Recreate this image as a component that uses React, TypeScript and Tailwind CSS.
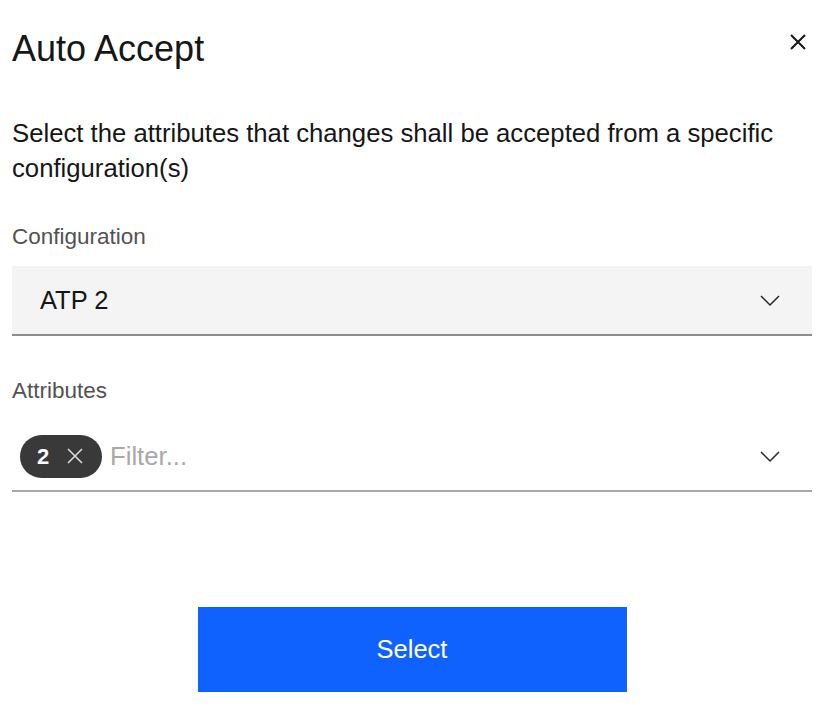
import React from 'react';

const Chevron: React.FC = () => (
  <svg width="22" height="22" viewBox="0 0 22 22" fill="none">
    <path d="M2 7l9 9 9-9" stroke="#262626" strokeWidth="1.5" />
  </svg>
);

export default function App() {
  return (
    <div className="w-[819px] h-[707px] bg-white font-['Liberation_Sans',Arial,sans-serif] text-[#161616] relative overflow-hidden">
      {/* Close */}
      <button className="absolute left-[788px] top-[32px] w-[20px] h-[20px] flex items-center justify-center">
        <svg width="18" height="18" viewBox="0 0 18 18">
          <path d="M2 2l14 14M16 2L2 16" stroke="#161616" strokeWidth="2" />
        </svg>
      </button>

      <div className="flex flex-col pl-[12px] pr-[7px]">
        {/* Title */}
        <h1 className="mt-[28px] text-[36px] leading-[42px] font-normal">Auto Accept</h1>

        {/* Description */}
        <p className="mt-[46px] text-[25.7px] leading-[35px] text-[#161616] pr-[20px]">
          Select the attributes that changes shall be accepted from a specific configuration(s)
        </p>

        {/* Configuration */}
        <label className="mt-[39px] text-[22.5px] leading-[24px] text-[#525252]">Configuration</label>
        <div className="mt-[17px] h-[70px] bg-[#f4f4f4] border-b-2 border-[#8d8d8d] flex items-center justify-between pl-[28px] pr-[31px]">
          <span className="text-[25.5px]">ATP 2</span>
          <Chevron />
        </div>

        {/* Attributes */}
        <label className="mt-[43px] text-[22.5px] leading-[24px] text-[#525252]">Attributes</label>
        <div className="mt-[19px] h-[70px] border-b-2 border-[#a8a8a8] flex items-center justify-between pl-[8px] pr-[31px]">
          <div className="flex items-center gap-[8px]">
            <span className="h-[43px] w-[82px] rounded-full bg-[#393939] text-white flex items-center pl-[17px] gap-[18px] text-[22px] font-bold">
              <span>2</span>
              <svg width="16" height="16" viewBox="0 0 16 16">
                <path d="M1 1l14 14M15 1L1 15" stroke="#e0e0e0" strokeWidth="1.5" />
              </svg>
            </span>
            <span className="text-[25.7px] text-[#a8a8a8]">Filter...</span>
          </div>
          <Chevron />
        </div>

        {/* Action */}
        <div className="mt-[115px] flex justify-center">
          <button className="w-[429px] h-[85px] bg-[#0f62fe] text-white text-[25.5px]">Select</button>
        </div>
      </div>
    </div>
  );
}
